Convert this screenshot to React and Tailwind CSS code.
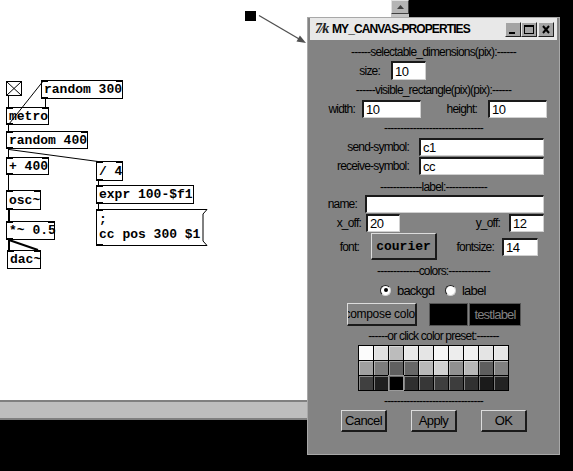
import React from "react";

const SANS = "font-[family-name:'Liberation_Sans',Arial,sans-serif]";
const MONO = "font-[family-name:'Liberation_Mono','Courier_New',monospace]";

const nodes = [
  { x: 41, y: 80, w: 82, h: 19, t: "random 300", i: 2, o: 1 },
  { x: 6, y: 107, w: 43, h: 18, t: "metro", i: 2, o: 1 },
  { x: 6, y: 131, w: 82, h: 18, t: "random 400", i: 2, o: 1 },
  { x: 6, y: 157, w: 43, h: 18, t: "+ 400", i: 2, o: 1 },
  { x: 96, y: 161, w: 27, h: 20, t: "/ 4", i: 2, o: 1 },
  { x: 96, y: 185, w: 98, h: 19, t: "expr 100-$f1", i: 1, o: 1 },
  { x: 6, y: 190, w: 35, h: 20, t: "osc~", i: 2, o: 1 },
  { x: 6, y: 221, w: 49, h: 19, t: "*~ 0.5", i: 2, o: 1 },
  { x: 7, y: 250, w: 34, h: 19, t: "dac~", i: 2, o: 0 },
];

const presets = [
  ["#fcfcfc", "#e0e0e0", "#bcbcbc", "#e8e8e8", "#e5e5e5", "#f6f6f6", "#ededed", "#f1f1f1", "#e4e4e4", "#e6e6e6"],
  ["#a0a0a0", "#7c7c7c", "#606060", "#676767", "#b8b8b8", "#d2d2d2", "#909090", "#b7b7b7", "#5e5e5e", "#808080"],
  ["#404040", "#202020", "#000000", "#2f2f2f", "#373737", "#3e3e3e", "#3d3d3d", "#313131", "#1b1b1b", "#232323"],
];

function Obj({ n }) {
  const ins = Array.from({ length: n.i });
  return (
    <div
      className="absolute border border-black bg-white"
      style={{ left: n.x, top: n.y, width: n.w, height: n.h }}
    >
      {ins.map((_, k) => (
        <div
          key={k}
          className={`absolute top-[-1px] w-[7px] h-[2px] bg-black ${k === 0 ? "left-[-1px]" : "right-[-1px]"}`}
        />
      ))}
      {n.o > 0 && <div className="absolute bottom-[-1px] left-[-1px] w-[7px] h-[2px] bg-black" />}
      <div className={`${MONO} font-bold text-[13px] leading-none h-full flex items-center pl-[2px] whitespace-nowrap text-black`}>
        {n.t}
      </div>
    </div>
  );
}

function PdWindow() {
  return (
    <div className="absolute left-0 top-0 flex flex-col">
      <div className="flex h-[400px]">
        <div className="relative w-[391px] h-[400px] bg-white">
          <div className="absolute left-[6px] top-[81px] w-[16px] h-[15px] border border-black bg-white">
            <svg width="14" height="13" className="absolute left-0 top-0">
              <line x1="0" y1="0" x2="14" y2="13" stroke="black" strokeWidth="1" />
              <line x1="14" y1="0" x2="0" y2="13" stroke="black" strokeWidth="1" />
            </svg>
          </div>
          {nodes.map((n) => (
            <Obj key={n.t} n={n} />
          ))}
          <div className="absolute left-[96px] top-[209px] w-[112px] h-[37px]">
            <svg width="112" height="37" className="absolute left-0 top-0">
              <polygon
                points="0.5,0.5 111,0.5 107,5 107,32 111,36.5 0.5,36.5"
                fill="white"
                stroke="black"
                strokeWidth="1"
              />
              <rect x="0" y="0" width="7" height="2" fill="black" />
              <rect x="0" y="35" width="7" height="2" fill="black" />
            </svg>
            <div className={`relative ${MONO} font-bold text-[13px] leading-[15px] pl-[3px] pt-[3px] text-black whitespace-pre`}>
              {";\ncc pos 300 $1"}
            </div>
          </div>
          <svg width="391" height="400" className="absolute left-0 top-0 pointer-events-none">
            <g stroke="black" strokeWidth="1" fill="none">
              <line x1="8.5" y1="96" x2="8.5" y2="107" />
              <line x1="9" y1="124" x2="44" y2="80" />
              <line x1="45.5" y1="99" x2="45.5" y2="107" />
              <line x1="8.5" y1="125" x2="8.5" y2="131" />
              <line x1="8.5" y1="149" x2="8.5" y2="157" />
              <line x1="9" y1="149.5" x2="98" y2="161.5" />
              <line x1="8.5" y1="175" x2="8.5" y2="190" />
              <line x1="98.5" y1="181" x2="98.5" y2="185" />
              <line x1="98.5" y1="204" x2="98.5" y2="209" />
            </g>
            <g stroke="black" strokeWidth="2" fill="none">
              <line x1="9" y1="210" x2="9" y2="221" />
              <line x1="9" y1="240" x2="9" y2="250" />
              <line x1="9" y1="240" x2="38" y2="250" />
            </g>
          </svg>
        </div>
        <div className="w-[18px] h-[400px] bg-[#c4c4c4] flex flex-col">
          <div className="h-[14px] bg-[#b4b4b4] border-t border-l border-t-[#e0e0e0] border-l-[#e0e0e0] border-r border-b border-r-[#404040] border-b-[#404040] flex items-center justify-center">
            <svg width="7" height="4">
              <polygon points="3.5,0 7,4 0,4" fill="#404040" />
            </svg>
          </div>
        </div>
      </div>
      <div className="w-[391px] h-[20px] bg-[#bebebe] border-t-2 border-b-2 border-[#808080]" />
    </div>
  );
}

function Annotation() {
  return (
    <>
      <div className="absolute left-[245px] top-[11px] w-[11px] h-[10px] bg-black" />
      <svg width="573" height="471" className="absolute left-0 top-0 pointer-events-none">
        <line x1="259" y1="15.5" x2="300" y2="39.5" stroke="#505050" strokeWidth="1.3" />
        <polygon points="306,43 296.5,41.6 299.9,35.5" fill="#505050" />
      </svg>
    </>
  );
}

function Field({ className = "", value = "" }) {
  return (
    <div
      className={`h-full bg-white border-t-2 border-l-2 border-t-[#1a1a1a] border-l-[#1a1a1a] border-r border-b border-r-[#d0d0d0] border-b-[#d0d0d0] flex items-center pl-[2px] text-[13px] tracking-[-0.4px] text-black ${className}`}
    >
      {value}
    </div>
  );
}

function Btn({ className = "", children }) {
  return (
    <div
      className={`h-full bg-[#838383] border-t border-l border-t-[#dcdcdc] border-l-[#dcdcdc] border-r-2 border-b-2 border-r-[#1a1a1a] border-b-[#1a1a1a] flex items-center justify-center overflow-hidden whitespace-nowrap text-black ${className}`}
    >
      {children}
    </div>
  );
}

function Sep({ className = "", children }) {
  return (
    <div className={`h-[14px] flex items-center justify-center whitespace-nowrap text-[12px] text-black ${className}`}>
      {children}
    </div>
  );
}

function Radio({ on }) {
  return (
    <div className="w-[11px] h-[11px] rounded-full bg-white border border-t-[#202020] border-l-[#202020] border-r-[#d0d0d0] border-b-[#d0d0d0] flex items-center justify-center">
      {on && <div className="w-[4px] h-[4px] rounded-full bg-black" />}
    </div>
  );
}

function TitleBtn({ children, className = "" }) {
  return (
    <div
      className={`w-[16px] h-[15px] bg-[#a4a4a4] border-t border-l border-t-[#e8e8e8] border-l-[#e8e8e8] border-r border-b border-r-[#202020] border-b-[#202020] relative ${className}`}
    >
      {children}
    </div>
  );
}

function Dialog() {
  return (
    <div
      className={`absolute left-[307px] top-[17px] w-[253px] h-[438px] bg-[#838383] border border-[#a8a8a8] flex flex-col ${SANS} text-black leading-none tracking-[-0.8px]`}
    >
      <div className="mx-[2px] h-[22px] bg-[#e8e8e8] flex items-center">
        <span className="ml-[5px] w-[17px] font-[family-name:'Liberation_Serif',serif] italic font-bold text-[14px] text-[#222] tracking-[-1px]">
          7⁄k
        </span>
        <span className="font-bold text-[12px] tracking-[-0.9px] text-black">MY_CANVAS-PROPERTIES</span>
        <div className="ml-auto mr-[3px] flex items-center">
          <TitleBtn>
            <div className="absolute left-[3px] bottom-[2px] w-[6px] h-[2px] bg-black" />
          </TitleBtn>
          <TitleBtn>
            <div className="absolute left-[2px] top-[2px] w-[10px] h-[9px] border border-black border-t-2" />
          </TitleBtn>
          <TitleBtn className="ml-[1px]">
            <svg width="14" height="13" className="absolute left-0 top-0">
              <line x1="4" y1="3" x2="10" y2="10" stroke="black" strokeWidth="2" />
              <line x1="10" y1="3" x2="4" y2="10" stroke="black" strokeWidth="2" />
            </svg>
          </TitleBtn>
        </div>
      </div>

      <Sep className="mt-[5px]">------selectable_dimensions(pix):------</Sep>
      <div className="mt-[2px] h-[19px] flex items-center text-[12px]">
        <span className="w-[72px] text-right">size:</span>
        <Field className="ml-[11px] w-[35px]" value="10" />
      </div>

      <Sep className="mt-[3px]">------visible_rectangle(pix)(pix):------</Sep>
      <div className="mt-[3px] h-[18px] flex items-center text-[12px]">
        <span className="w-[47px] text-right">width:</span>
        <Field className="ml-[7px] w-[59px]" value="10" />
        <span className="w-[56px] text-right">height:</span>
        <Field className="ml-[11px] w-[59px]" value="10" />
      </div>

      <Sep className="mt-[3px]">-------------------------------</Sep>
      <div className="mt-[3px] h-[18px] flex items-center text-[12px]">
        <span className="w-[101px] text-right">send-symbol:</span>
        <Field className="ml-[10px] w-[125px]" value="c1" />
      </div>
      <div className="mt-[1px] h-[18px] flex items-center text-[12px]">
        <span className="w-[101px] text-right">receive-symbol:</span>
        <Field className="ml-[10px] w-[125px]" value="cc" />
      </div>

      <Sep className="mt-[5px]">-------------label:-------------</Sep>
      <div className="mt-[1px] h-[18px] flex items-center text-[12px]">
        <span className="w-[49px] text-right">name:</span>
        <Field className="ml-[8px] w-[179px]" value="" />
      </div>
      <div className="mt-[1px] h-[18px] flex items-center text-[12px]">
        <span className="w-[53px] text-right">x_off:</span>
        <Field className="ml-[5px] w-[34px]" value="20" />
        <span className="w-[100px] text-right">y_off:</span>
        <Field className="ml-[9px] w-[35px]" value="12" />
      </div>
      <div className="mt-[1px] h-[27px] flex items-center text-[12px]">
        <span className="w-[51px] text-right">font:</span>
        <Btn className={`ml-[12px] w-[66px] ${MONO} font-bold text-[13px] tracking-normal`}>courier</Btn>
        <span className="w-[57px] text-right">fontsize:</span>
        <div className="ml-[8px] h-[18px] flex">
          <Field className="w-[36px]" value="14" />
        </div>
      </div>

      <Sep className="mt-[4px]">-------------colors:-------------</Sep>
      <div className="mt-[5px] h-[14px] flex items-center text-[13px]">
        <div className="ml-[72px] w-[65px] flex items-center gap-[6px]">
          <Radio on />
          <span>backgd</span>
        </div>
        <div className="flex items-center gap-[6px]">
          <Radio />
          <span>label</span>
        </div>
      </div>
      <div className="mt-[6px] h-[23px] flex items-center">
        <Btn className="ml-[39px] w-[70px] text-[12px] tracking-[-0.3px]">compose color</Btn>
        <div className="ml-[12px] w-[39px] h-full bg-black border border-[#555]" />
        <div className="ml-[1px] w-[52px] h-full bg-black border border-[#555] flex items-center justify-center text-[13px] text-[#808080]">
          testlabel
        </div>
      </div>

      <Sep className="mt-[3px]">------or click color preset:-------</Sep>
      <div className="mt-[2px] h-[46px] flex justify-center">
        <div className="grid grid-cols-10 gap-[1px] bg-black p-[1px]">
          {presets.flat().map((c, k) => (
            <div
              key={k}
              className={`w-[14px] h-[14px] border-t border-l border-t-[#ffffff66] border-l-[#ffffff66] ${k === 22 ? "outline outline-1 outline-[#9a9a9a]" : ""}`}
              style={{ backgroundColor: c }}
            />
          ))}
        </div>
      </div>

      <Sep className="mt-[3px]">-------------------------------</Sep>
      <div className="mt-[2px] h-[22px] flex items-center text-[13px] tracking-[-0.6px]">
        <Btn className="ml-[33px] w-[46px]">Cancel</Btn>
        <Btn className="ml-[24px] w-[46px]">Apply</Btn>
        <Btn className="ml-[24px] w-[46px]">OK</Btn>
      </div>
    </div>
  );
}

export default function App() {
  return (
    <div className="relative w-[573px] h-[471px] bg-black overflow-hidden">
      <PdWindow />
      <Annotation />
      <Dialog />
    </div>
  );
}
